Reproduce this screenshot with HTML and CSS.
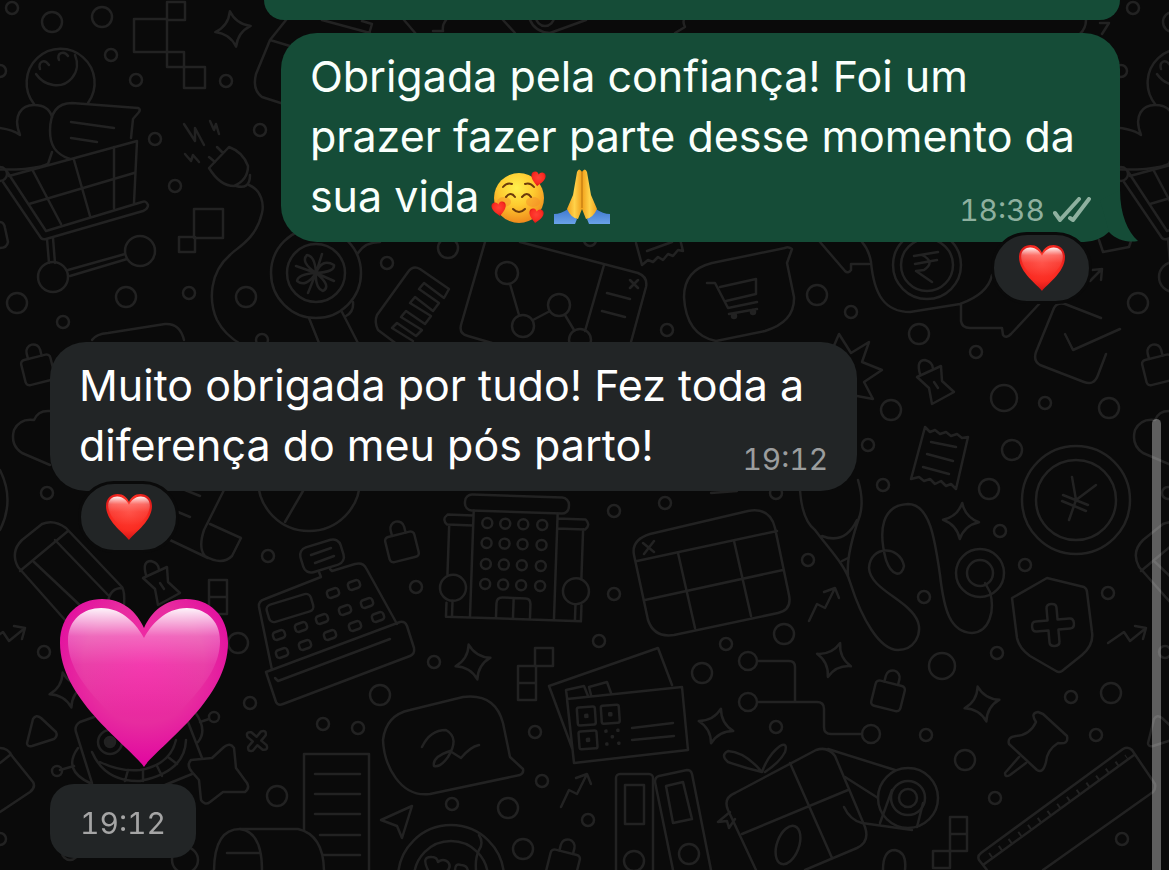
FILE: index.html
```html
<!DOCTYPE html>
<html lang="pt-BR">
<head>
  <meta charset="UTF-8">
  <meta name="viewport" content="width=device-width, initial-scale=1.0">
  <title>Conversa</title>
  <link rel="stylesheet" href="styles.css">
</head>
<body>
  <svg class="wallpaper" viewBox="0 0 1169 870" preserveAspectRatio="xMinYMin slice" aria-hidden="true">
    <defs>
      <path id="sparkle" d="M0-18Q4-4 18 0Q4 4 0 18Q-4 4-18 0Q-4-4 0-18z"/>
      <g id="lock"><rect x="-15" y="-9" width="30" height="26" rx="4"/><path d="M-7-9v-6a7 7 0 0 1 14 0v6"/></g>
      <path id="tag" d="M-17 0L7-11L8 4L20 15L-2 27L-5 11zM-14-3Q-18-17-9-17Q-1-15-1-8M0 5l4 6"/>
      <path id="trend" d="M-15 17L-7 0L1 4L11-16M0-12L11-16L15-6"/>
      <rect id="key" x="-6" y="-4" width="12" height="8" rx="3"/>
      <!-- left edge of the tile, drawn again on the right side -->
      <g id="edge">
        <path d="M34 104A34 34 0 1 1 88 103M36 74C44 86 62 90 72 78C78 71 78 62 75 55M40 69C38 62 44 58 49 65M59 60C56 53 64 50 68 56"/>
        <path d="M-50 131C-35 126 5 124 20 135C12 115 22 105 34 105C44 105 50 110 52 117M52 152L48 164C30 172-25 172-52 160" />
        <path d="M70 159C55 154 50 145 50 131C50 112 57 103 72 103L138 108Q141 109 139 112L133 119L131 138M71 122L114 128M71 138L97 142"/>
        <path d="M3 182L41 238Q43 240 46 239L143 211Q148 209 148 205Q146 200 142 202L46 231L6 170M9 176L137 141L134 203M33 171L61 224M74 160L90 216M114 147V208M29 204L134 173M47 239L49 263M53 238L55 263M68 270L125 254M70 276L127 259"/>
        <circle cx="0" cy="174" r="7"/><circle cx="53" cy="277" r="15"/><circle cx="140" cy="251" r="15"/>
        <circle cx="12" cy="8" r="6"/><circle cx="0" cy="71" r="6"/><circle cx="52" cy="22" r="10"/><circle cx="17" cy="303" r="10"/>
        <use href="#lock" transform="translate(37 366) rotate(-14)"/>
        <path d="M50 411Q38 410 34 420Q20 418 14 430Q10 445 22 453L50 465"/>
        <path d="M65 620L18 567Q10 552 22 540L42 524Q54 519 66 528L122 587Q125 592 124 605M20 571L68 531M34 562L85 610M55 540L108 595M108 602Q110 588 122 588"/>
        <path d="M-13 643L3 632L9 641L25 628M14 626L25 628L22 639"/>
        <path d="M27 743L33 719Q36 714 41 718L56 732Q58 736 54 739L32 746Q27 747 27 743z"/>
        <circle cx="47" cy="493" r="6"/><circle cx="44" cy="652" r="6"/>
      </g>
    </defs>
    <use href="#edge"/>
    <use href="#edge" x="1121"/>

    <circle cx="111" cy="55" r="6"/><circle cx="136" cy="80" r="6"/><circle cx="226" cy="81" r="6"/><circle cx="155" cy="139" r="6"/>
    <circle cx="260" cy="130" r="6"/><circle cx="175" cy="186" r="6"/><circle cx="189" cy="293" r="6"/><circle cx="63" cy="322" r="6"/>
    <circle cx="387" cy="263" r="6"/><circle cx="262" cy="340" r="6"/><circle cx="667" cy="330" r="6"/><circle cx="851" cy="312" r="6"/>
    <circle cx="976" cy="352" r="6"/><circle cx="1045" cy="403" r="6"/><circle cx="868" cy="445" r="6"/><circle cx="883" cy="485" r="6"/>
    <circle cx="1000" cy="531" r="6"/><circle cx="665" cy="503" r="6"/><circle cx="776" cy="493" r="6"/><circle cx="268" cy="556" r="6"/>
    <circle cx="250" cy="703" r="6"/><circle cx="323" cy="724" r="6"/><circle cx="358" cy="728" r="6"/><circle cx="214" cy="717" r="5"/>
    <circle cx="57" cy="771" r="5"/><circle cx="0" cy="839" r="6"/><circle cx="614" cy="511" r="6"/><circle cx="614" cy="594" r="6"/>
    <circle cx="416" cy="587" r="6"/><circle cx="599" cy="641" r="6"/><circle cx="434" cy="662" r="6"/><circle cx="535" cy="732" r="6"/>
    <circle cx="542" cy="781" r="6"/><circle cx="452" cy="804" r="6"/><circle cx="588" cy="820" r="6"/><circle cx="726" cy="644" r="6"/>
    <circle cx="776" cy="727" r="6"/><circle cx="808" cy="560" r="6"/><circle cx="924" cy="597" r="6"/><circle cx="1025" cy="565" r="6"/>
    <circle cx="997" cy="653" r="6"/><circle cx="1108" cy="593" r="6"/><circle cx="1071" cy="697" r="6"/><circle cx="1096" cy="735" r="6"/>
    <circle cx="926" cy="735" r="6"/><circle cx="995" cy="798" r="6"/><circle cx="1122" cy="839" r="6"/><circle cx="590" cy="240" r="6"/>
    <circle cx="102" cy="17" r="10"/><circle cx="126" cy="297" r="10"/><circle cx="246" cy="297" r="10"/><circle cx="448" cy="248" r="10"/>
    <circle cx="817" cy="295" r="10"/><circle cx="919" cy="334" r="10"/><circle cx="891" cy="410" r="10"/><circle cx="1109" cy="408" r="10"/>
    <circle cx="1012" cy="450" r="10"/><circle cx="989" cy="489" r="10"/><circle cx="238" cy="643" r="10"/><circle cx="380" cy="695" r="10"/>
    <circle cx="277" cy="796" r="10"/><circle cx="702" cy="673" r="10"/><circle cx="508" cy="808" r="10"/><circle cx="523" cy="849" r="10"/>
    <circle cx="784" cy="634" r="10"/><circle cx="965" cy="760" r="10"/><circle cx="1111" cy="693" r="10"/>
    <circle cx="1004" cy="398" r="13"/><circle cx="942" cy="666" r="13"/><circle cx="185" cy="860" r="13"/><circle cx="70" cy="852" r="8"/>

    <use href="#sparkle" transform="translate(233 29) rotate(-10)"/>
    <use href="#sparkle" transform="translate(961 521) rotate(4)"/>
    <use href="#sparkle" transform="translate(473 662) rotate(-14)"/>
    <use href="#sparkle" transform="translate(716 726) rotate(16)"/>
    <use href="#sparkle" transform="translate(834 660) rotate(20)"/>
    <use href="#sparkle" transform="translate(982 704) rotate(-14)"/>
    <use href="#sparkle" transform="translate(67 690) rotate(-14)"/>
    <use href="#lock" transform="translate(401 543) rotate(-14)"/>
    <use href="#lock" transform="translate(889 692) rotate(14)"/>
    <use href="#lock" transform="translate(564 861) rotate(14)"/>
    <use href="#tag" x="934" y="377"/>
    <use href="#tag" x="160" y="578"/>
    <use href="#trend" x="824" y="604"/>
    <use href="#trend" x="576" y="790"/>

    <!-- pixel blocks -->
    <path d="M134 19h33v33h-33zM167 2h18v18h-18zM167 52h17v15h-17zM184 67h21v21h-21zM194 209h29v29h-29zM179 237h16v15h-16zM209 580h18v17h-18zM209 597h18v17h-18zM535 648h18v18h-18zM518 666h18v17h-18zM518 683h18v17h-18zM950 817h17v17h-17zM950 834h17v17h-17zM933 851h17v17h-17z"/>

    <!-- plug -->
    <path d="M184 124L195 141L195 128L204 145M210 121L214 130L216 124L219 134M185 154l6 7l2-6l6 7M217 147l6 6M209 157l6 5M229 147L209 168Q220 186 234 186Q248 180 248 166Q243 152 229 147zM236 186Q250 190 250 175"/>
    <path d="M249 185C262 190 264 205 262 213C256 240 236 248 230 255C210 272 208 300 217 320C222 330 230 338 242 345"/>

    <!-- strip between the sent bubbles -->
    <path d="M286 20L270 40L256 74Q252 90 262 97L290 106M270 40L290 46M322 20L370 33M362 21L372 24L369 34M404 20l12 14M446 20q-4 5-3 11h-10M503 20l12 13M530 20q5 12 20 13l36-13M675 33l10-6q-3-6 0-9M1086 20q0 8-6 14M1100 23h9l-7 11"/>
    <circle cx="545" cy="17" r="9"/>

    <!-- magnifier and badge -->
    <circle cx="316" cy="273" r="45"/><circle cx="316" cy="273" r="29"/>
    <path d="M316 273Q300 262 307 255Q315 256 316 273Q322 258 334 265Q335 272 316 273Q332 286 323 291Q315 288 316 273Q306 288 297 281Q298 274 316 273M316 273L322 254M316 273L334 281M316 273L308 293M316 273L296 266M309 318l12 30M342 312l18 35M353 302q1 10-7 14M358 253Q365 242 380 242"/>

    <!-- phone, chart window, receipt -->
    <path d="M398 345L378 330Q374 322 377 315L408 272Q413 265 420 269L449 289L444 298L424 283L419 289L439 303L433 311L415 297L410 303L431 316L425 324L406 311L401 317L422 330L416 336L397 323L392 328L413 341"/>
    <path d="M485 242L461 325Q459 334 468 336L492 343M520 242L638 273Q648 277 646 287L631 342M604 265L585 331M510 284L519 315M533 320L550 311M565 315L574 330M630 280l8 8m0-8l-8 8M607 293L630 299M602 311L625 317"/>
    <circle cx="507" cy="273" r="11"/><circle cx="523" cy="326" r="11"/><circle cx="559" cy="305" r="11"/><circle cx="580" cy="340" r="11"/>
    <path d="M636 243L642 265l6-5 5 2 5-5 5 3 5-6 5 2 5-6 5 1-3-12M647 251l25-9"/>
    <path d="M92 340Q96 334 108 333L165 324Q180 323 184 340"/>

    <!-- speech bubbles -->
    <path d="M792 249Q788 246 785 248L712 263Q684 270 684 297Q686 335 716 341L765 331Q795 322 794 297L787 263zM707 283h8l13 25l29-6M720 287l36-8v15l-30 7M729 314l28-5"/>
    <circle class="dot" cx="734" cy="316" r="2"/><circle class="dot" cx="753" cy="312" r="2"/>
    <path d="M820 242L845 271q3 3 6-1v-6h18M862 242Q869 250 871 262C874 295 885 312 910 312L960 304Q988 294 992 275M961 305v16Q962 328 970 328h32l1 7q3 4 8-1L1040 303"/>
    <circle cx="927" cy="265" r="34"/><circle cx="927" cy="265" r="26"/>
    <path d="M914 256l24-4M915 264l22-4M922 255Q936 262 924 270l-8 1L932 282"/>
    <path d="M430 794C400 798 384 765 383 740Q386 715 410 710L463 697Q495 693 503 723L510 757L523 769Q524 773 520 775zM422 747Q430 730 446 730Q460 738 448 757Q440 768 434 766Q432 757 450 751L461 758Q470 747 479 745"/>

    <path d="M1101 318L1065 304Q1057 302 1054 308L1036 352Q1033 361 1040 365L1084 382Q1094 386 1098 375L1106 354M1065 334L1073 350L1120 329M1090 281l12-12M1092 270l10-1l-1 11M1099 240l4 12l26-5l2-6"/>
    <path d="M833 348L839 334L851 353L869 342L862 362L882 370L864 382L873 399L857 396"/>
    <path d="M925 427l5 5 5-2 5 4 6-2 5 4 6-2 5 4 6-1L956 489l-5-5-5 2-5-5-6 3-5-5-6 2-5-4-8 2zM931 442L956 447M927 454L953 461M923 467L949 474"/>
    <circle cx="1076" cy="500" r="54"/><circle cx="1076" cy="500" r="40"/>
    <path d="M1072 477L1076 500L1096 485M1076 500L1069 520M1063 495l25 10M1062 501l24 10M0 470Q15 500 0 530"/>

    <!-- stethoscope -->
    <path d="M800 490Q802 520 815 530C830 550 845 565 850 582C862 620 880 650 898 650C914 650 922 635 918 622C910 600 870 590 869 568C870 545 900 545 904 566C902 577 892 577 886 560C878 530 882 505 908 504C930 504 935 540 940 575C944 610 950 632 972 633C990 632 995 610 990 592L985 583M858 480Q864 500 860 515Q846 555 848 575M822 536Q845 545 857 520M842 561l6-3"/>
    <circle cx="980" cy="573" r="24"/><circle cx="980" cy="573" r="13"/>

    <path d="M1047 578L1084 587Q1087 589 1087 592L1092 632Q1094 645 1082 655L1062 671Q1059 673 1056 671L1030 656Q1019 648 1017 638L1012 598z"/>
    <path transform="translate(1053 625) rotate(-5)" d="M-5-17q0-4 5-4q5 0 5 4v12h12q4 0 4 5q0 5-4 5h-12v12q0 4-5 4q-5 0-5-4v-12h-12q-4 0-4-5q0-5 4-5h12z"/>

    <!-- paper roll, ball -->
    <path d="M224 490L204 530Q198 548 205 556Q222 566 232 556L241 538L210 524M170 540L208 558M185 490l15 6M178 512l12 5M303 491L285 522"/>
    <circle cx="309" cy="480" r="51"/>

    <!-- cash register -->
    <path d="M272 670L259 607Q258 601 265 599L321 577L319 572M330 569L332 571L355 564Q363 562 366 568L397 624M266 672L400 622Q405 621 407 626L414 648Q415 654 410 656L283 704Q278 706 276 702zM275 678L278 681L390 639M311 555l20-7M315 563l19-7"/>
    <rect x="-23" y="-9" width="46" height="18" rx="5" transform="translate(290 608) rotate(-17)"/>
    <rect x="-21" y="-13" width="42" height="26" rx="8" transform="translate(322 556) rotate(-17)"/>
    <use href="#key" transform="translate(333 593) rotate(-20)"/><use href="#key" transform="translate(354 585) rotate(-20)"/>
    <use href="#key" transform="translate(322 619) rotate(-20)"/><use href="#key" transform="translate(345 610) rotate(-20)"/>
    <use href="#key" transform="translate(367 603) rotate(-20)"/><use href="#key" transform="translate(279 635) rotate(-20)"/>
    <use href="#key" transform="translate(301 627) rotate(-20)"/><use href="#key" transform="translate(282 653) rotate(-20)"/>
    <use href="#key" transform="translate(305 645) rotate(-20)"/><use href="#key" transform="translate(330 635) rotate(-20)"/>
    <use href="#key" transform="translate(355 626) rotate(-20)"/><use href="#key" transform="translate(378 617) rotate(-20)"/>

    <!-- building -->
    <g transform="rotate(2 515 560)">
      <rect x="463" y="496" width="104" height="16" rx="7"/>
      <path d="M472 512V619M556 512V619M472 517H446q-6 5 0 10H472M556 517H584q6 5 0 10H556M448 527V577M582 527V577M448 605V619H583V603M454 603v15M577 603v15M498 618v-14q0-6 6-6h23q5 0 5 6v14M515 598v20"/>
      <circle cx="454" cy="590" r="13"/><circle cx="577" cy="589" r="13"/>
      <circle cx="486" cy="524" r="5"/><circle cx="504" cy="524" r="5"/><circle cx="522" cy="524" r="5"/><circle cx="541" cy="524" r="5"/>
      <circle cx="486" cy="544" r="5"/><circle cx="504" cy="544" r="5"/><circle cx="522" cy="544" r="5"/><circle cx="541" cy="544" r="5"/>
      <circle cx="486" cy="565" r="5"/><circle cx="504" cy="565" r="5"/><circle cx="522" cy="565" r="5"/><circle cx="541" cy="565" r="5"/>
      <circle cx="486" cy="585" r="5"/><circle cx="504" cy="585" r="5"/><circle cx="522" cy="585" r="5"/><circle cx="541" cy="585" r="5"/>
    </g>

    <path d="M650 534L748 511Q770 507 775 528L789 595Q792 610 778 613L674 635Q654 638 648 620L634 555Q631 540 650 534M637 561L777 531M645 600L783 570M678 553L695 628M734 541L751 616M643 543l11 9m0-11l-10 13M711 493l26-2"/>

    <!-- tickets -->
    <path d="M572 748L549 686L658 648L672 685M567 699L682 687L688 750L574 763zM567 698l-1-8 18-4 4 10M591 695l-2-8 18-5 4 11M632 728L673 723M632 740L674 736"/>
    <g transform="rotate(-4 600 725)">
      <rect x="578" y="706" width="18" height="18" rx="2"/><rect x="602" y="706" width="18" height="18" rx="2"/><rect x="578" y="730" width="18" height="18" rx="2"/>
      <path class="dot" d="M586 714h2v2h-2zM610 714h2v2h-2zM586 738h2v2h-2zM605 731h1v1h-1zM617 731h1v1h-1zM611 737h1v1h-1zM605 744h1v1h-1zM617 744h1v1h-1z"/>
    </g>

    <!-- circuit -->
    <path d="M757 661h32q6 0 6 6v35M757 702h60q7 0 7 7v18q0 7 7 7h31"/>
    <circle cx="748" cy="661" r="9"/><circle cx="748" cy="702" r="9"/><circle cx="871" cy="734" r="9"/>

    <!-- push pin -->
    <path d="M1043 714L1067 736Q1069 745 1058 743Q1047 750 1046 762Q1043 774 1037 770L1009 744Q1007 737 1016 736Q1030 735 1036 722Q1030 713 1038 712zM1019 757L1005 773Q1005 778 1010 775L1026 763"/>

    <!-- ruler -->
    <path d="M987 870L979 860Q977 856 981 853L1123 749Q1128 746 1132 750L1155 784Q1156 789 1153 792L1043 870M983 865L1134 755"/>
    <path class="ticks" d="M990 856L1127 757"/>

    <!-- gift and tape -->
    <path d="M735 793L816 750Q828 746 835 756L865 827Q870 842 857 848L805 870M735 793Q723 798 728 810L756 870M790 763L832 858M742 834L848 790M762 772Q745 768 728 762Q720 755 728 751Q745 752 762 772Q768 755 780 746Q788 742 785 752Q780 762 765 772M730 812l-12 10 9-1 2 7 6-9"/>
    <ellipse cx="788" cy="845" rx="11" ry="20" transform="rotate(20 788 845)"/>
    <circle cx="908" cy="798" r="30"/><circle cx="908" cy="798" r="17"/><circle cx="908" cy="798" r="9"/>
    <path d="M828 749L895 770M845 777L878 798M844 807Q850 820 862 823L912 830M880 823L892 790M917 827L923 803M883 870q0-20 12-20q12 2 10 20"/>

    <!-- binders -->
    <rect x="616" y="774" width="37" height="120" rx="4"/><rect x="625" y="785" width="19" height="39"/><circle cx="634" cy="861" r="10"/>
    <path d="M673 870L655 782Q655 777 659 776L687 770Q691 770 692 774L711 870M666 786L683 782L692 819L673 823z"/><circle cx="689" cy="854" r="10"/>

    <path d="M412 806L381 820L397 826L402 838z"/>
    <circle cx="451" cy="878" r="53"/><circle cx="451" cy="878" r="37"/>
    <path d="M479 835q5 8 0 15q-4 8-3 20M428 870q-7-14 4-13q5 0 6 5q5-4 10 0q4 5-2 10M455 870q0-7 6-5q6 0 7 6"/>

    <path d="M191 760Q186 765 192 772L199 780L201 800Q205 806 210 802L223 792L245 792Q250 788 247 783L236 768L234 748Q230 742 224 747L212 758z"/>
    <path transform="translate(257 741) rotate(40)" d="M-3-10q3-5 6 0v7h7q5 3 0 6h-7v7q-3 5-6 0v-7h-7q-5-3 0-6h7z"/>

    <!-- slot machine -->
    <path d="M94 717L80 722Q74 726 76 732L92 783M92 752Q105 782 140 781Q185 772 186 740M100 762Q120 772 140 770Q170 765 176 740M60 770L74 766M78 748Q62 770 90 783M200 722L209 719M188 722L202 758M195 712Q208 730 198 742M165 785L192 774M128 770l-3 11M143 770v11M157 766l5 10M168 757l9 7"/>
    <circle cx="110" cy="742" r="12"/><circle class="dot" cx="110" cy="742" r="5"/>
    <path d="M0 748q8 0 12 8L33 782Q36 787 30 792L0 812M0 763L10 755M0 222Q4 222 5 228L8 242Q7 248 0 248"/>

    <path d="M304 870V754h65v116M315 774h45M315 794h45M315 814h45M320 835h40M320 855h40"/>
    <path class="sheet" d="M214 872Q214 829 240 829H298Q324 835 324 872z"/>
    <path d="M240 829Q262 832 262 870M227 853h33"/>
  </svg>

  <!-- shared emoji shapes -->
  <svg class="sprite" aria-hidden="true">
    <defs>
      <radialGradient id="red" cx=".5" cy=".4" r=".65"><stop offset="0" stop-color="#ff4136"/><stop offset=".6" stop-color="#fa2c22"/><stop offset="1" stop-color="#c80d12"/></radialGradient>
      <radialGradient id="pink" cx=".5" cy=".38" r=".65"><stop offset="0" stop-color="#f325a6"/><stop offset=".55" stop-color="#e72c9f"/><stop offset="1" stop-color="#e000a0"/></radialGradient>
      <linearGradient id="shine" x1="0" y1="0" x2="0" y2="1"><stop offset="0" stop-color="#fff" stop-opacity=".95"/><stop offset=".06" stop-color="#fff" stop-opacity=".75"/><stop offset=".2" stop-color="#fff" stop-opacity=".3"/><stop offset=".4" stop-color="#fff" stop-opacity=".1"/><stop offset=".75" stop-color="#fff" stop-opacity="0"/></linearGradient>
      <radialGradient id="face" cx=".45" cy=".3" r=".7"><stop offset="0" stop-color="#fff04d"/><stop offset=".5" stop-color="#fecb30"/><stop offset="1" stop-color="#f08a1c"/></radialGradient>
      <linearGradient id="hand" x1="0" y1="0" x2="1" y2="0"><stop offset="0" stop-color="#f2a11b"/><stop offset=".5" stop-color="#ffd24a"/><stop offset="1" stop-color="#f0a01c"/></linearGradient>
      <linearGradient id="sleeve" x1="0" y1="0" x2="0" y2="1"><stop offset="0" stop-color="#3f78cf"/><stop offset="1" stop-color="#6aa2e8"/></linearGradient>
      <path id="heart" d="M84 168C70 147 0 101 0 44C0 15 20 0 42 0C63 0 77 13 84 29C91 13 105 0 126 0C148 0 168 15 168 44C168 101 98 147 84 168z"/>
      <path id="heart-shine" d="M84 150C60 118 8 86 8 42C8 20 24 9 41 9C63 9 77 26 84 39C91 26 105 9 127 9C144 9 160 20 160 42C160 86 108 118 84 150z"/>
    </defs>
  </svg>

  <main class="chat">
    <div class="bubble sent previous"></div>

    <article class="message from-me">
      <div class="bubble sent">
        <p class="text">Obrigada pela confiança! Foi um<br>prazer fazer parte desse momento da<br>sua vida
          <svg class="emoji" viewBox="0 0 56 56" role="img" aria-label="rosto sorridente com corações">
            <circle cx="28" cy="30" r="25" fill="url(#face)"/>
            <ellipse cx="13" cy="34" rx="7" ry="5" fill="#f58a2a" opacity=".45"/><ellipse cx="42" cy="34" rx="7" ry="5" fill="#f58a2a" opacity=".45"/>
            <g fill="none" stroke="#6b3a0c" stroke-width="2" stroke-linecap="round"><path d="M12 19q4-5 9-3M34 16q5-2 9 3M15 29q5-6 9 0M31 29q5-6 9 0M22 41q6 6 12 0"/></g>
            <use href="#heart" transform="translate(41 3) rotate(8) scale(.085)" fill="url(#red)"/>
            <use href="#heart" transform="translate(0 35) rotate(-8) scale(.085)" fill="url(#red)"/>
            <use href="#heart" transform="translate(39 40) rotate(8) scale(.085)" fill="url(#red)"/>
          </svg><svg class="emoji" viewBox="0 0 56 56" role="img" aria-label="mãos unidas">
            <path d="M0 56V46Q7 46 14 41L23 51L21 56z" fill="url(#sleeve)"/><path d="M56 56V46Q49 46 42 41L33 51L35 56z" fill="url(#sleeve)"/>
            <path d="M28 4Q25-1 23 4L19 27L13 41Q17 50 24 51L28 41z" fill="url(#hand)"/>
            <path d="M28 4Q31-1 33 4L37 27L43 41Q39 50 32 51L28 41z" fill="url(#hand)"/>
            <path d="M28 3V40" stroke="#b8720f" stroke-width="1"/>
          </svg></p>
        <div class="meta">
          <time>18:38</time>
          <svg class="ticks-read" viewBox="0 0 38 26" role="img" aria-label="Entregue"><path d="M2 16L7 23L26 2M17 21L20 23L36 2"/></svg>
        </div>
        <svg class="tail" viewBox="0 0 38 52" aria-hidden="true"><path d="M20 0C20 25 28 42 38 51C28 53 16 50 9 42L0 10z"/></svg>
      </div>
      <button class="reaction" type="button" aria-label="Reação: coração">
        <svg class="reaction-heart" viewBox="0 0 168 168" aria-hidden="true"><use href="#heart" fill="url(#red)"/><use href="#heart-shine" fill="url(#shine)"/></svg>
      </button>
    </article>

    <article class="message from-them">
      <div class="bubble received">
        <p class="text">Muito obrigada por tudo! Fez toda a<br>diferença do meu pós parto!</p>
        <div class="meta"><time>19:12</time></div>
      </div>
      <button class="reaction" type="button" aria-label="Reação: coração">
        <svg class="reaction-heart" viewBox="0 0 168 168" aria-hidden="true"><use href="#heart" fill="url(#red)"/><use href="#heart-shine" fill="url(#shine)"/></svg>
      </button>
    </article>

    <article class="message from-them">
      <svg class="big-heart" viewBox="0 0 168 168" role="img" aria-label="coração rosa"><use href="#heart" fill="url(#pink)"/><use href="#heart-shine" fill="url(#shine)"/></svg>
      <div class="stamp"><time>19:12</time></div>
    </article>
  </main>
  <div class="scrollbar"></div>
</body>
</html>
```
FILE: styles.css
```css
* {
  box-sizing: border-box;
}
body {
  margin: 0;
  min-height: 100vh;
  overflow: hidden;
  background-color: #0a0a0a;
  color: #fafffc;
  font-family: Inter, "Liberation Sans", sans-serif;
}
.wallpaper {
  position: fixed;
  top: 0;
  left: 0;
  width: 100%;
  height: 100%;
  fill: none;
  stroke: #222;
  stroke-width: 2.5;
  stroke-linecap: round;
  stroke-linejoin: round;
}
.wallpaper .dot {
  fill: #222;
}
.wallpaper .sheet {
  fill: #0a0a0a;
}
.wallpaper .ticks {
  stroke-width: 6;
  stroke-linecap: butt;
  stroke-dasharray: 2 10;
}
.sprite {
  position: absolute;
  width: 0;
  height: 0;
}
.chat {
  position: relative;
  display: flex;
  flex-direction: column;
  padding: 0 49px 0 50px;
}
.message {
  position: relative;
}
.from-me {
  align-self: flex-end;
  margin-top: 13px;
}
.from-them {
  align-self: flex-start;
  margin-top: 100px;
}
.from-them + .from-them {
  margin-top: 108px;
}
.bubble {
  position: relative;
  display: grid;
  padding: 13px 29px 16px;
  border-radius: 36px;
}
.sent {
  background-color: #154c37;
}
.received {
  background-color: #222526;
  color: #fff;
}
.previous {
  align-self: flex-end;
  width: 81%;
  max-width: 856px;
  height: 20px;
  padding: 0;
  border-radius: 0 0 36px 36px;
}
.text {
  grid-area: 1 / 1;
  margin: 0;
  padding-right: 16px;
  font-size: 43px;
  line-height: 60px;
}
.received .text {
  padding-right: 24px;
}
.emoji {
  width: 56px;
  height: 56px;
  margin-right: 7px;
  vertical-align: -12px;
}
.meta {
  grid-area: 1 / 1;
  align-self: end;
  justify-self: end;
  display: flex;
  align-items: center;
  gap: 8px;
  margin-bottom: -2px;
  color: #8eb09f;
  font-size: 30px;
  line-height: 36px;
  font-variant-numeric: tabular-nums;
}
.received .meta {
  color: #9b9d9e;
}
.ticks-read {
  width: 38px;
  height: 26px;
  fill: none;
  stroke: #8eb09f;
  stroke-width: 4;
  stroke-linecap: round;
  stroke-linejoin: round;
}
.tail {
  position: absolute;
  right: -18px;
  bottom: 0;
  width: 38px;
  height: 52px;
  fill: #154c37;
}
.reaction {
  position: absolute;
  bottom: -62px;
  display: flex;
  align-items: center;
  justify-content: center;
  width: 101px;
  height: 72px;
  padding: 0;
  border: 3px solid #0a0a0a;
  border-radius: 36px;
  background-color: #222526;
}
.from-me .reaction {
  right: 28px;
}
.from-them .reaction {
  left: 28px;
}
.reaction-heart {
  width: 46px;
  height: 46px;
}
.big-heart {
  display: block;
  width: 168px;
  height: 168px;
  margin: 0 0 17px 10px;
}
.stamp {
  width: fit-content;
  padding: 21px 30px 17px;
  border-radius: 24px;
  background-color: #222526;
  color: #a5a5a5;
  font-size: 30px;
  line-height: 36px;
  font-variant-numeric: tabular-nums;
}
.scrollbar {
  position: fixed;
  top: 419px;
  right: 8px;
  bottom: 0;
  width: 9px;
  border-radius: 5px 5px 0 0;
  background-color: rgba(255, 255, 255, 0.35);
}
```
